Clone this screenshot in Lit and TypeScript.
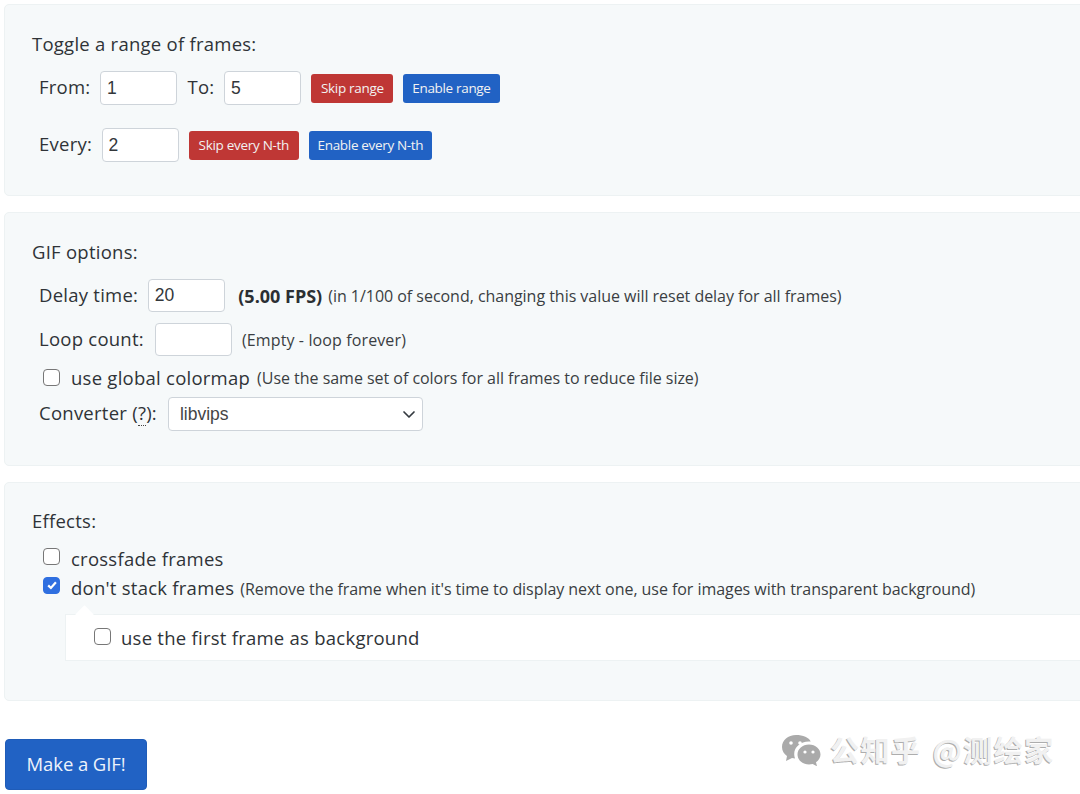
import { LitElement, html, css } from "lit";
import { customElement } from "lit/decorators.js";

@customElement("app-root")
export class AppRoot extends LitElement {
  static styles = css`
    :host {
      display: block;
      position: relative;
      width: 1080px;
      height: 794px;
      overflow: hidden;
      background: #fff;
      color: #2f3337;
      font-family: "Open Sans", "Noto Sans", sans-serif;
      font-size: 18.5px;
      letter-spacing: 0.25px;
    }
    .page {
      display: flex;
      flex-direction: column;
      width: 1200px;
      padding: 4px 0 0 4px;
      box-sizing: border-box;
    }
    .card {
      background: #f6f9fa;
      border: 1px solid #edf2f3;
      border-radius: 5px;
      box-sizing: border-box;
      padding: 0 0 0 27px;
      display: flex;
      flex-direction: column;
    }
    .c1 { height: 192px; padding-top: 26px; }
    .c2 { height: 254px; margin-top: 16px; padding-top: 26px; }
    .c3 { height: 219px; margin-top: 16px; padding-top: 25px; }
    .title { line-height: 25px; height: 25px; }
    .row { display: flex; align-items: center; margin-left: 7px; white-space: nowrap; }
    .lab { padding-bottom: 3px; }
    .r1 { margin-top: 15px; height: 34px; }
    .r2 { margin-top: 23px; height: 34px; }
    .r3 { margin-top: 15px; height: 33px; }
    .r4 { margin-top: 11px; height: 33px; }
    .r5 { margin-top: 9px; height: 24px; margin-left: 11px; }
    .r6 { margin-top: 8px; height: 34px; }
    input.txt {
      box-sizing: border-box;
      width: 77px;
      height: 100%;
      border: 1px solid #ced4da;
      border-radius: 4px;
      background: #fff;
      padding: 0 5.5px;
      font: 17.5px "Liberation Sans", Arial, sans-serif;
      color: #33373b;
      outline: none;
    }
    .l1 { margin-right: 10px; }
    .l2 { margin-right: 11px; }
    .gap { margin-left: 10px; margin-right: 10px; }
    .btn {
      box-sizing: border-box;
      height: 29px;
      border: 1px solid transparent;
      border-radius: 3px;
      color: #f2f2f2;
      font: 13.5px "Open Sans", sans-serif;
      letter-spacing: -0.3px;
      margin-left: 10px;
      display: flex;
      align-items: center;
    }
    .red { background: #bf3735; padding: 0 8.5px; }
    .blue { background: #2162c4; padding: 0 8px; letter-spacing: -0.33px; }
    .note { font-size: 16px; letter-spacing: -0.03px; color: #3a3e42; }
    .empty { margin-left: 10px; letter-spacing: 0.12px; }
    .colornote { margin-left: 7px; padding-top: 2px; }
    .stacknote { margin-left: 6px; padding-top: 8px; letter-spacing: -0.05px; }
    .bold { font-weight: 700; color: #2b2f33; font-size: 18px; letter-spacing: 0; margin: 0 6px 0 13px; }
    .cb {
      box-sizing: border-box;
      width: 17px;
      height: 17px;
      flex: none;
      border: 1.5px solid #777;
      border-radius: 4px;
      background: #fff;
      margin-right: 11px;
    }
    .cb.on {
      background: #2f6fe0;
      border-color: #2f6fe0;
      display: flex;
      align-items: center;
      justify-content: center;
    }
    .cb svg { display: block; }
    .help { border-bottom: 1px dotted #444; line-height: 19px; }
    .select {
      box-sizing: border-box;
      width: 255px;
      height: 34px;
      margin-left: 11px;
      border: 1px solid #ced4da;
      border-radius: 4px;
      background: #fff;
      display: flex;
      align-items: center;
      justify-content: space-between;
      padding: 0 5px 0 11px;
      font: 17.5px "Liberation Sans", Arial, sans-serif;
      letter-spacing: 0;
      color: #444;
    }
    .e1 { margin-top: 11px; height: 24px; margin-left: 11px; }
    .e2 { margin-top: 5px; height: 24px; margin-left: 11px; }
    .e1 .big, .e2 .big { padding-top: 5px; }
    .r5 .big { padding-top: 1px; }
    .sub {
      position: relative;
      box-sizing: border-box;
      margin: 17px 0 0 33px;
      height: 47px;
      background: #fff;
      border: 1px solid #edf2f3;
      border-right: none;
      display: flex;
      align-items: center;
      padding-left: 28px;
    }
    .sub::before {
      content: "";
      position: absolute;
      left: 12px;
      top: -7px;
      width: 13px;
      height: 13px;
      background: #fff;
      transform: rotate(45deg);
    }
    .sub .cb { position: relative; margin-top: -2px; margin-right: 10px; }
    .sub span { position: relative; }
    .make {
      box-sizing: border-box;
      align-self: flex-start;
      margin: 38px 0 0 1px;
      width: 142px;
      height: 51px;
      padding-bottom: 2px;
      background: #2162c4;
      border: 1px solid #1f5cb8;
      border-radius: 4px;
      color: #eef3fb;
      letter-spacing: -0.1px;
      display: flex;
      align-items: center;
      justify-content: center;
    }
    .mark {
      position: absolute;
      left: 781px;
      top: 728px;
      display: flex;
      align-items: center;
      font: 700 29px "Noto Sans CJK SC", sans-serif;
      letter-spacing: 1.5px;
      word-spacing: 3px;
      white-space: nowrap;
    }
    .mark svg { margin-right: 9px; }
    .mark span { color: #f1f1f1; text-shadow: -1px 1px 0 #adadad; }
  `;

  render() {
    const check = html`<svg width="12" height="12" viewBox="0 0 12 12"><path d="M2.2 6.4 4.9 9 9.9 3.2" fill="none" stroke="#fff" stroke-width="2.2"/></svg>`;
    return html`
      <div class="page">
        <section class="card c1">
          <div class="title">Toggle a range of frames:</div>
          <div class="row r1">
            <span class="l1 lab">From:</span><input class="txt" value="1" />
            <span class="gap lab">To:</span><input class="txt" value="5" />
            <div class="btn red">Skip range</div>
            <div class="btn blue">Enable range</div>
          </div>
          <div class="row r2">
            <span class="l1 lab">Every:</span><input class="txt" value="2" />
            <div class="btn red">Skip every N-th</div>
            <div class="btn blue">Enable every N-th</div>
          </div>
        </section>
        <section class="card c2">
          <div class="title">GIF options:</div>
          <div class="row r3">
            <span class="l1 lab">Delay time:</span><input class="txt" value="20" />
            <span class="bold">(5.00 FPS)</span>
            <span class="note">(in 1/100 of second, changing this value will reset delay for all frames)</span>
          </div>
          <div class="row r4">
            <span class="l2 lab">Loop count:</span><input class="txt" value="" />
            <span class="note empty">(Empty - loop forever)</span>
          </div>
          <div class="row r5">
            <div class="cb"></div>
            <span class="big">use global colormap</span>
            <span class="note colornote">(Use the same set of colors for all frames to reduce file size)</span>
          </div>
          <div class="row r6">
            <span class="lab">Converter (<span class="help">?</span>):</span>
            <div class="select">
              <span>libvips</span>
              <svg width="16" height="16" viewBox="0 0 16 16"><path d="M3 6l5 5 5-5" fill="none" stroke="#343a40" stroke-width="1.7" stroke-linecap="round" stroke-linejoin="round"/></svg>
            </div>
          </div>
        </section>
        <section class="card c3">
          <div class="title">Effects:</div>
          <div class="row e1"><div class="cb"></div><span class="big">crossfade frames</span></div>
          <div class="row e2">
            <div class="cb on">${check}</div>
            <span class="big">don't stack frames</span>
            <span class="note stacknote">(Remove the frame when it's time to display next one, use for images with transparent background)</span>
          </div>
          <div class="sub"><div class="cb"></div><span>use the first frame as background</span></div>
        </section>
        <div class="make">Make a GIF!</div>
      </div>
      <div class="mark">
        <svg width="40" height="34" viewBox="0 0 40 34">
          <path fill="#aaa" d="M15 3C7 3 1 8 1 15c0 4 2 7 5 9l-1 5 6-3c1 .3 2 .5 3 .6-.5-1.500-.8-3-.8-4.600 0-7 6.500-12.500 14.500-12.500h2C28 5.500 22 3 15 3z"/>
          <path fill="#aaa" d="M28 12.500c-6.500 0-11.500 4.500-11.500 10s5 10 11.500 10c1.300 0 2.500-.2 3.700-.5l4.300 2.300-1-4c2.700-1.900 4.500-4.700 4.500-7.800 0-5.500-5-10-11.500-10z"/>
          <circle cx="10" cy="11" r="1.800" fill="#fff"/><circle cx="19" cy="11" r="1.800" fill="#fff"/>
          <circle cx="24" cy="20" r="1.600" fill="#fff"/><circle cx="32" cy="20" r="1.600" fill="#fff"/>
        </svg>
        <span>公知乎 @测绘家</span>
      </div>
    `;
  }
}
